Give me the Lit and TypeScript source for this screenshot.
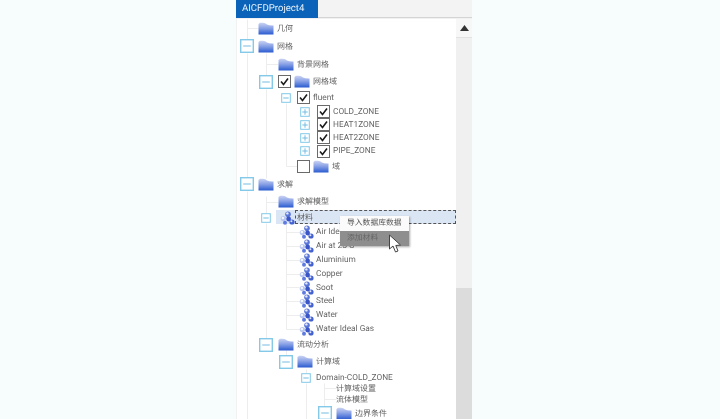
import { LitElement, html, css, svg, nothing } from "lit";
import { customElement } from "lit/decorators.js";
import { classMap } from "lit/directives/class-map.js";

type Row = {
  h: number;
  label: string;
  tx: number;
  exp?: [number, number, boolean?];
  chk?: [number, boolean, number?];
  ico?: [number, "folder" | "mat"];
  sel?: boolean;
};

const mats = ["Air Ideal Gas", "Air at 25 C", "Aluminium", "Copper", "Soot", "Steel", "Water", "Water Ideal Gas"];
const matH = [14, 14, 14, 14, 13, 14, 14, 14];

const rows: Row[] = [
  { h: 18, label: "几何", tx: 277, ico: [258, "folder"] },
  { h: 18, label: "网格", tx: 277, exp: [240, 14], ico: [258, "folder"] },
  { h: 18, label: "背景网格", tx: 297, ico: [278, "folder"] },
  { h: 17, label: "网格域", tx: 313, exp: [259, 14], chk: [278, true], ico: [294, "folder"] },
  { h: 15, label: "fluent", tx: 313, exp: [281, 10], chk: [297, true] },
  { h: 13, label: "COLD_ZONE", tx: 333, exp: [300, 10, true], chk: [317, true] },
  { h: 13, label: "HEAT1ZONE", tx: 333, exp: [300, 10, true], chk: [317, true] },
  { h: 13, label: "HEAT2ZONE", tx: 333, exp: [300, 10, true], chk: [317, true] },
  { h: 14, label: "PIPE_ZONE", tx: 333, exp: [300, 10, true], chk: [317, true] },
  { h: 17, label: "域", tx: 332, chk: [297, false], ico: [313, "folder"] },
  { h: 18, label: "求解", tx: 277, exp: [240, 14], ico: [258, "folder"] },
  { h: 17, label: "求解模型", tx: 297, ico: [278, "folder"] },
  { h: 15, label: "材料", tx: 297, exp: [261, 10], ico: [280, "mat"], sel: true },
  ...mats.map((m, i): Row => ({ h: matH[i], label: m, tx: 316, ico: [299, "mat"] })),
  { h: 17, label: "流动分析", tx: 297, exp: [259, 14], ico: [278, "folder"] },
  { h: 17, label: "计算域", tx: 316, exp: [279, 14], ico: [297, "folder"] },
  { h: 15, label: "Domain-COLD_ZONE", tx: 316, exp: [301, 10] },
  { h: 7, label: "计算域设置", tx: 336 },
  { h: 14, label: "流体模型", tx: 336 },
  { h: 14, label: "边界条件", tx: 355, exp: [318, 14], ico: [336, "folder"] },
];

const LEFT = 237;
const TOP = 19;

// Tree connectors: [x1, y1, x2, y2] in page coordinates.
const lines: number[][] = [
  [247, 19, 247, 40], [247, 28, 258, 28], [247, 53, 247, 177], [247, 191, 247, 419],
  [266, 53, 266, 76], [266, 64, 278, 64], [266, 89, 266, 178], [266, 196, 266, 213],
  [266, 202, 278, 202], [266, 223, 266, 338], [286, 103, 286, 166], [286, 166, 297, 166],
  [286, 223, 286, 329], [286, 232, 299, 232], [286, 246, 299, 246], [286, 260, 299, 260],
  [286, 274, 299, 274], [286, 287, 299, 287], [286, 301, 299, 301], [286, 315, 299, 315],
  [286, 329, 299, 329], [286, 350, 286, 356], [306, 369, 306, 373], [306, 383, 306, 419],
  [324, 383, 324, 407], [324, 388, 336, 388], [324, 399, 336, 399],
];

const isCjk = (s: string) => /[\u4e00-\u9fff]/.test(s);

@customElement("app-root")
export class AppRoot extends LitElement {
  static styles = css`
    :host {
      display: block;
      width: 720px;
      height: 419px;
      overflow: hidden;
      background: #f6fdfc;
      font-family: Roboto, "Noto Sans", "Noto Sans CJK SC", sans-serif;
      text-rendering: geometricPrecision;
    }
    .stage {
      position: relative;
      height: 419px;
      padding-left: 236px;
      filter: blur(0.5px);
    }
    .panel {
      width: 236px;
      height: 419px;
      display: flex;
      flex-direction: column;
      background: #f1f1f1;
    }
    .tabs {
      height: 18px;
      flex: none;
      background: #f3f3f3;
      border-bottom: 1px solid #d4d4d4;
      box-sizing: border-box;
    }
    .tab {
      width: 82px;
      height: 18px;
      background: #0b63b9;
      color: #e8f2fb;
      font-size: 9.6px;
      line-height: 17px;
      padding-left: 6px;
      box-sizing: border-box;
    }
    .body {
      flex: 1;
      display: flex;
      min-height: 0;
      margin-top: 1px;
    }
    .tree {
      position: relative;
      width: 219px;
      margin-left: 1px;
      background: #fff;
      overflow: hidden;
    }
    .wires {
      position: absolute;
      left: 0;
      top: 0;
    }
    .row {
      position: relative;
      display: flex;
      align-items: center;
      color: #666;
      font-size: 8.3px;
      white-space: nowrap;
    }
    .label {
      position: relative;
    }
    .label.cjk {
      font-size: 8px;
      color: #5f5f5f;
    }
    .exp,
    .chk,
    .ico {
      flex: none;
      display: block;
      position: relative;
    }
    .hl {
      position: absolute;
      top: 0;
      bottom: 1px;
      left: 39px;
      right: 0;
      background: #dbe6f5;
    }
    .dash {
      position: absolute;
      top: 0;
      bottom: 1px;
      left: 58px;
      right: 0;
      border: 1px dashed #555;
      box-sizing: border-box;
    }
    .sb {
      width: 16px;
      display: flex;
      flex-direction: column;
      background: #f0f0f0;
    }
    .sb-btn {
      height: 18px;
      flex: none;
      background: #f7f7f7;
      display: flex;
      align-items: center;
      justify-content: center;
      border-bottom: 1px solid #e2e2e2;
    }
    .sb-track {
      height: 250px;
      flex: none;
    }
    .sb-thumb {
      flex: 1;
      background: #dcdcdc;
    }
    .menu {
      position: absolute;
      left: 340px;
      top: 216px;
      width: 69px;
      background: #fbfbfb;
      box-shadow: 1px 1px 2px rgba(0, 0, 0, 0.35);
      font-size: 7.8px;
      color: #555;
    }
    .item {
      height: 15px;
      line-height: 14px;
      padding-left: 7px;
    }
    .item.on {
      background: #8e8e8e;
      color: #666;
    }
    .cursor {
      position: absolute;
      left: 388px;
      top: 234px;
    }
  `;

  private folder(x: number) {
    return html`<svg class="ico" style="margin-left:${x}px" width="16" height="13" viewBox="0 0 16 13">
      <defs>
        <linearGradient id="fg" x1="0" y1="0" x2="0" y2="1">
          <stop offset="0" stop-color="#c9d2f2" />
          <stop offset="0.45" stop-color="#8aa2e6" />
          <stop offset="1" stop-color="#2a5bd0" />
        </linearGradient>
      </defs>
      <path d="M0.5 2 L0.5 12.5 L15.5 12.5 L15.5 3.5 Q11 3.6 9 2.6 Q7.5 0.8 5 0.8 L2 0.8 Z" fill="url(#fg)" />
    </svg>`;
  }

  private mat(x: number) {
    return html`<svg class="ico" style="margin-left:${x}px" width="15" height="14" viewBox="0 0 15 14">
      <circle cx="8" cy="3.2" r="2.8" fill="#5a76d8" />
      <circle cx="7.4" cy="2.4" r="1.2" fill="#e6eafa" />
      <circle cx="3.4" cy="7.6" r="2.7" fill="#b7c5f0" />
      <circle cx="2.9" cy="7" r="1.3" fill="#f4f6fd" />
      <circle cx="8.6" cy="8" r="2.4" fill="#3a55c6" />
      <circle cx="12" cy="11" r="2.6" fill="#4461d0" />
      <circle cx="11.4" cy="10.3" r="1" fill="#dde3f8" />
      <circle cx="5" cy="11.8" r="2" fill="#5f7be0" />
    </svg>`;
  }

  private expander(x: number, size: number, plus?: boolean) {
    const c = size / 2;
    const arm = size * 0.27;
    const sw = size > 10 ? 1.4 : 1;
    return html`<svg class="exp" style="margin-left:${x}px" width="${size}" height="${size}" viewBox="0 0 ${size} ${size}">
      <rect x="0.7" y="0.7" width="${size - 1.4}" height="${size - 1.4}" fill="#fff" stroke="#84c9e8" stroke-width="${sw}" />
      <path d="M${c - arm} ${c} H${c + arm}" stroke="#74bde0" />
      ${plus ? svg`<path d="M${c} ${c - arm} V${c + arm}" stroke="#74bde0" />` : nothing}
    </svg>`;
  }

  private check(x: number, on: boolean) {
    return html`<svg class="chk" style="margin-left:${x}px" width="13" height="13" viewBox="0 0 13 13">
      <rect x="0.5" y="0.5" width="12" height="12" fill="#fff" stroke="#6a6a6a" />
      ${on ? svg`<path d="M3 6.5 L5.5 9.5 L10 3.5" fill="none" stroke="#1c1c1c" stroke-width="1.6" />` : nothing}
    </svg>`;
  }

  private row(r: Row) {
    // Every part stores its absolute page x; the margins turn these into flow gaps.
    let cur = LEFT;
    const gap = (x: number, w: number) => {
      const m = x - cur;
      cur = x + w;
      return m;
    };
    return html`<div class="row" style="height:${r.h}px">
      ${r.sel ? html`<span class="hl"></span><span class="dash"></span>` : nothing}
      ${r.exp ? this.expander(gap(r.exp[0], r.exp[1]), r.exp[1], r.exp[2]) : nothing}
      ${r.chk ? this.check(gap(r.chk[0], 13), r.chk[1]) : nothing}
      ${r.ico
        ? r.ico[1] === "folder"
          ? this.folder(gap(r.ico[0], 16))
          : this.mat(gap(r.ico[0], 15))
        : nothing}
      <span class=${classMap({ label: true, cjk: isCjk(r.label) })} style="margin-left:${gap(r.tx, 0)}px">${r.label}</span>
    </div>`;
  }

  render() {
    return html`<div class="stage">
      <div class="panel">
        <div class="tabs"><div class="tab">AICFDProject4</div></div>
        <div class="body">
          <div class="tree">
            <svg class="wires" width="219" height="400">
              ${lines.map(
                ([a, b, c, d]) =>
                  svg`<line x1="${a - LEFT + 0.5}" y1="${b - TOP + 0.5}" x2="${c - LEFT + 0.5}" y2="${d - TOP + 0.5}" stroke="#ededed" />`
              )}
            </svg>
            ${rows.map((r) => this.row(r))}
          </div>
          <div class="sb">
            <div class="sb-btn">
              <svg width="9" height="6" viewBox="0 0 9 6"><path d="M4.5 0 L9 6 H0 Z" fill="#333" /></svg>
            </div>
            <div class="sb-track"></div>
            <div class="sb-thumb"></div>
          </div>
        </div>
      </div>
      <div class="menu">
        <div class="item">导入数据库数据</div>
        <div class="item on">添加材料</div>
      </div>
      <svg class="cursor" width="15" height="21" viewBox="0 0 15 21">
        <path d="M1.5 1 L1.5 15 L5 12 L7.5 18 L10 17 L7.8 11.5 L12.5 11 Z" fill="#fff" stroke="#444" stroke-width="1" stroke-linejoin="round" />
      </svg>
    </div>`;
  }
}
